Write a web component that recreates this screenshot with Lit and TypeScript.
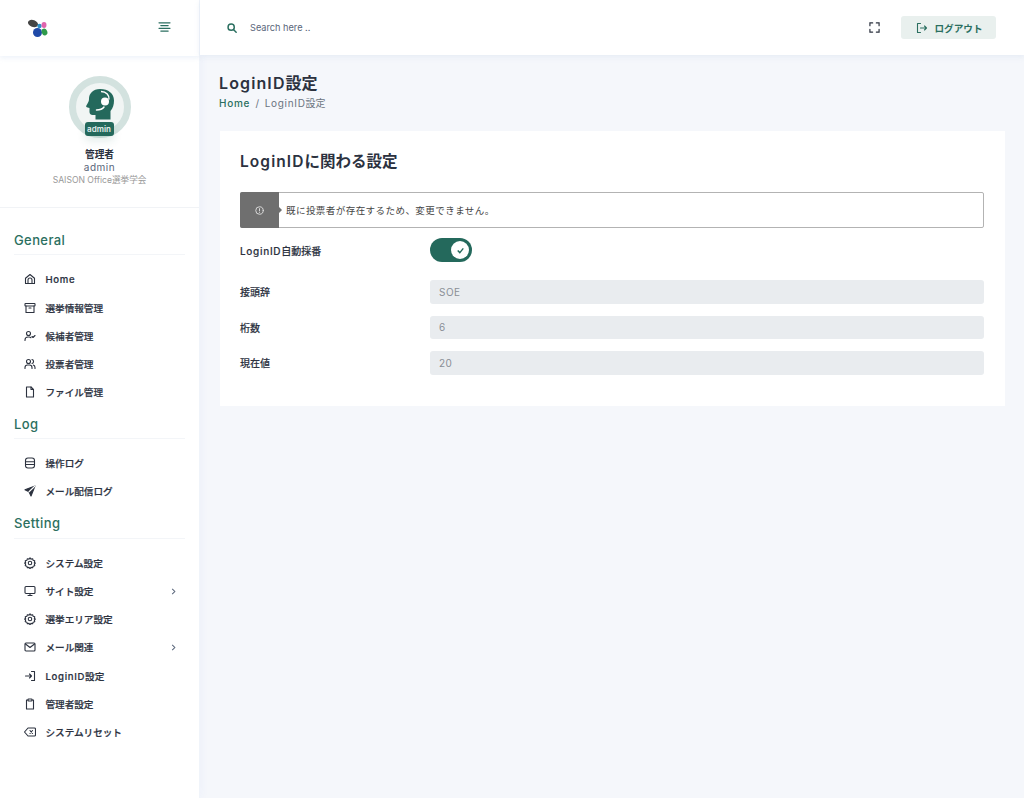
import { LitElement, html, css, svg } from "lit";
import { customElement } from "lit/decorators.js";

const ic = (body: unknown, sw = 2.2) => html`<svg class="ic" viewBox="0 0 24 24" fill="none" stroke="currentColor" stroke-width=${sw} stroke-linecap="round" stroke-linejoin="round">${body}</svg>`;

/* Latin runs are tracked out a little so they take the width of the reference's wide geometric face. */
const lat = (s: string) => s.split(/([A-Za-z0-9]+)/).map((p, i) => (i % 2 ? html`<span class="l">${p}</span>` : p));

const icons: Record<string, unknown> = {
  home: svg`<path d="M3 10.5 12 3l9 7.5V21H3z"/><path d="M8 21v-7a4 4 0 0 1 8 0v7"/>`,
  archive: svg`<rect x="2" y="3" width="20" height="5" rx="1"/><path d="M4 8v13h16V8"/><path d="M10 12h4"/>`,
  usercheck: svg`<circle cx="9" cy="7" r="4"/><path d="M2 21v-1a6 6 0 0 1 6-6h2a6 6 0 0 1 4 1.5"/><path d="m16 13 2 2 4-4"/>`,
  users: svg`<circle cx="9" cy="7" r="4"/><path d="M2 21v-2a5 5 0 0 1 5-5h4a5 5 0 0 1 5 5v2"/><path d="M16 3.1a4 4 0 0 1 0 7.8"/><path d="M22 21v-2a5 5 0 0 0-3.5-4.8"/>`,
  file: svg`<path d="M14 2H5v20h14V7z"/><path d="M14 2v5h5"/>`,
  db: svg`<rect x="3" y="2" width="18" height="20" rx="5"/><path d="M3 9.5h18M3 15h18"/>`,
  send: svg`<path d="M22 2 2 9.5l8 4 4 8.5z" fill="currentColor"/><path d="M22 2 10 13.5" stroke="#fff"/>`,
  gear: svg`<circle cx="12" cy="12" r="3.5"/><path d="M12 1.500l2 2.800 3.300-.8 1 3.200 3.200 1-.8 3.300 2 1-2 2 .8 3.300-3.200 1-1 3.200-3.300-.8-2 2.800-2-2.800-3.300.8-1-3.200-3.200-1 .8-3.300-2-2 2-1-.8-3.300 3.200-1 1-3.200 3.300.8z"/>`,
  monitor: svg`<rect x="2" y="3" width="20" height="14" rx="2"/><path d="M8 21h8M12 17v4"/>`,
  mail: svg`<rect x="2" y="4" width="20" height="16" rx="2"/><path d="m3 6 9 7 9-7"/>`,
  login: svg`<path d="M15 3h6v18h-6"/><path d="M3 12h12M11 8l4 4-4 4"/>`,
  clipboard: svg`<path d="M8 4H5v18h14V4h-3"/><rect x="8" y="2" width="8" height="4" rx="1"/>`,
  del: svg`<path d="M21 4H8l-7 8 7 8h13a2 2 0 0 0 2-2V6a2 2 0 0 0-2-2z"/><path d="m17 9-5 6M12 9l5 6"/>`,
};

type Item = { t: string; i: string; more?: boolean };
const groups: { h: string; items: Item[] }[] = [
  { h: "General", items: [
    { t: "Home", i: "home" }, { t: "選挙情報管理", i: "archive" }, { t: "候補者管理", i: "usercheck" },
    { t: "投票者管理", i: "users" }, { t: "ファイル管理", i: "file" } ] },
  { h: "Log", items: [ { t: "操作ログ", i: "db" }, { t: "メール配信ログ", i: "send" } ] },
  { h: "Setting", items: [
    { t: "システム設定", i: "gear" }, { t: "サイト設定", i: "monitor", more: true }, { t: "選挙エリア設定", i: "gear" },
    { t: "メール関連", i: "mail", more: true }, { t: "LoginID設定", i: "login" }, { t: "管理者設定", i: "clipboard" },
    { t: "システムリセット", i: "del" } ] },
];

@customElement("app-root")
export class AppRoot extends LitElement {
  static styles = css`
    :host { display: block; height: 798px; overflow: hidden; background: #f5f7fb; color: #2c323f;
      font-family: "Inter", "Noto Sans CJK JP", sans-serif; }
    * { box-sizing: border-box; }
    .l { letter-spacing: .07em; }
    .shell { display: flex; height: 798px; }
    .side { width: 200px; flex: none; background: #fff; box-shadow: 0 0 10px rgba(68,102,242,.05); border-right: 1px solid #f0f4fa; }
    .logo-bar { height: 56px; display: flex; align-items: center; justify-content: space-between; padding: 0 28px 0 27px; box-shadow: 0 2px 5px rgba(230,237,247,.7); }
    .logo { width: 22px; height: 22px; display: block; margin-top: -2px; }
    .menu { width: 13px; height: 11px; color: #2b6f60; margin-top: -3px; display: block; }
    .profile { height: 152px; display: flex; flex-direction: column; align-items: center; padding-top: 20px; border-bottom: 1px solid #f1f3f6; }
    .avatar { position: relative; width: 62px; height: 62px; border-radius: 50%; background: #f1f5f4; border: 7px solid #d3e2df; display: flex; align-items: center; justify-content: center; }
    .avatar svg { width: 30px; height: 32px; display: block; margin-top: -6px; }
    .badge { position: absolute; left: 9px; top: 39px; width: 29px; height: 14px; border-radius: 3px; background: #24695c; color: #e6f0ee; font-size: 8px; font-weight: 600; line-height: 14px; text-align: center; box-shadow: 0 5px 8px rgba(36,105,92,.12); }
    .pname { font-size: 9.700px; font-weight: 700; line-height: 12px; margin-top: 11px; color: #2c323f; }
    .puser { font-size: 10px; line-height: 12px; color: #59667a; letter-spacing: .5px; }
    .porg { font-size: 8.600px; line-height: 12px; margin-top: 1px; color: #999; }
    nav { padding: 19px 14px 0; }
    .gh { font-size: 13px; font-weight: 500; line-height: 26px; height: 28px; color: #2b6f60; letter-spacing: .4px; border-bottom: 1px solid #f3f5f8; }
    .group:last-child .gh { height: 29px; }
    .group + .group { margin-top: 2px; }
    .items { padding: 10.300px 0 2.300px; }
    .item { height: 28.200px; display: flex; align-items: center; padding-left: 10px; padding-right: 8px; font-size: 9.600px; font-weight: 500; color: #2c323f; -webkit-text-stroke: .2px #2c323f; }
    .item .ic { width: 12px; height: 12px; margin-right: 9.500px; flex: none; -webkit-text-stroke: 0; }
    .label { flex: 1; }
    .chev { width: 7px; height: 7px; color: #59667a; }
    .main { flex: 1; min-width: 0; display: flex; flex-direction: column; }
    .top { height: 55px; flex: none; background: #fff; display: flex; align-items: center; padding: 0 27px; box-shadow: 0 2px 5px rgba(225,232,243,.8); }
    .search-ic { width: 10px; height: 10px; color: #2b6f60; }
    .search { margin-left: 13px; font-size: 9.200px; color: #59667a; flex: 1; }
    .full { width: 11px; height: 11px; color: #2c323f; margin-right: 21px; display: block; }
    .logout { width: 95px; height: 23px; border-radius: 3px; background: #e9f0ee; color: #2b6f60; font-size: 9.600px; font-weight: 600; display: flex; align-items: center; justify-content: center; gap: 7px; margin-right: 1px; }
    .logout svg { width: 12px; height: 12px; margin-left: 1px; }
    .content { padding: 17px 19px 0; }
    h1 { margin: 0; font-size: 16px; font-weight: 600; line-height: 22px; color: #2c323f; }
    .crumb { display: flex; font-size: 10px; line-height: 14px; margin-top: 2px; color: #6b7480; }
    .crumb b { font-weight: 500; color: #2b6f60; }
    .crumb i { font-style: normal; margin: 0 5.500px; }
    .card { margin: 21px 0 0 1px; background: #fff; height: 275px; padding: 21px 21px 0 20px; }
    h2 { margin: 0; font-size: 15.500px; font-weight: 600; line-height: 20px; color: #2c323f; }
    .alert { margin-top: 20px; height: 36px; display: flex; align-items: center; border: 1px solid #b3b3b3; border-radius: 2px; font-size: 9.500px; color: #444; }
    .alert-ic { position: relative; width: 39px; height: 36px; margin: -1px 0 -1px -1px; flex: none; background: #6f6f6f; border-radius: 2px 0 0 2px; display: flex; align-items: center; justify-content: center; color: #ddd; }
    .alert-ic svg { width: 9px; height: 9px; }
    .alert-ic::after { content: ""; position: absolute; right: -3px; top: 15px; border-left: 3px solid #6f6f6f; border-top: 3px solid transparent; border-bottom: 3px solid transparent; }
    .alert-txt { margin-left: 7px; letter-spacing: .45px; }
    .row { display: grid; grid-template-columns: 190px 1fr; align-items: center; font-size: 10px; font-weight: 500; color: #2c323f; -webkit-text-stroke: .15px #2c323f; }
    .row.sw { margin-top: 10px; margin-bottom: 18px; height: 24px; }
    .row.f { height: 23.500px; margin-bottom: 12px; }
    .toggle { position: relative; width: 42px; height: 24px; border-radius: 12px; background: #24695c; }
    .knob { position: absolute; right: 3px; top: 3px; width: 18px; height: 18px; border-radius: 50%; background: #fff; display: flex; align-items: center; justify-content: center; color: #24695c; }
    .knob svg { width: 7px; height: 7px; }
    .input { height: 100%; background: #e9ecef; border-radius: 3px; padding: 0 9px; display: flex; align-items: center; font-size: 10px; font-weight: 400; color: #8a8f96; letter-spacing: .5px; -webkit-text-stroke: 0; }
  `;

  render() {
    return html`<div class="shell">
      <aside class="side">
        <div class="logo-bar">
          <svg class="logo" viewBox="0 0 22 22">
            <ellipse cx="6" cy="7.500" rx="5.200" ry="3.500" transform="rotate(20 6 7.500)" fill="#444"/>
            <circle cx="12.500" cy="10" r="2.200" fill="#2d8fc7"/>
            <ellipse cx="17" cy="9" rx="2.500" ry="3" fill="#e064ad"/>
            <circle cx="10.500" cy="16.500" r="4.500" fill="#1f4aa8"/>
            <ellipse cx="17.500" cy="16" rx="2.800" ry="3.500" transform="rotate(-20 17.500 16)" fill="#2f9a4b"/>
          </svg>
          <svg class="menu" viewBox="0 0 14 12" fill="none" stroke="currentColor" stroke-width="1.300" stroke-linecap="round">
            <path d="M1 2h12M3 5h8M1 8h12M3 11h8"/>
          </svg>
        </div>
        <div class="profile">
          <div class="avatar">
            <svg viewBox="0 0 30 32">
              <path fill="#24695c" d="M15 1C8 1 4 5.500 4 11c0 2-.5 3-2 5.500-1 1.500-1.500 2.500.5 3l2 .5v4c0 2 1.500 3 3 3h3v4.500h15V23c2.500-3 3.500-6.500 3.500-10.500C29 5.500 23.500 1 15 1z"/>
              <path fill="none" stroke="#fff" stroke-width="1.400" d="M16 3.500c5.500 0 8.500 4 8 8"/>
              <circle cx="20" cy="13.500" r="4" fill="#fff"/>
              <path fill="none" stroke="#fff" stroke-width="1.500" stroke-linecap="round" d="M19 19c-1.500 2-4 3-7.500 3"/>
            </svg>
            <div class="badge">admin</div>
          </div>
          <div class="pname">管理者</div>
          <div class="puser">admin</div>
          <div class="porg">SAISON Office選挙学会</div>
        </div>
        <nav>
          ${groups.map((g) => html`<div class="group">
            <div class="gh">${g.h}</div>
            <div class="items">
              ${g.items.map((it) => html`<div class="item">
                ${ic(icons[it.i])}<div class="label">${lat(it.t)}</div>
                ${it.more ? html`<svg class="chev" viewBox="0 0 8 8" fill="none" stroke="currentColor" stroke-width="1.200"><path d="m2.500 1 3 3-3 3"/></svg>` : ""}
              </div>`)}
            </div>
          </div>`)}
        </nav>
      </aside>
      <div class="main">
        <header class="top">
          <svg class="search-ic" viewBox="0 0 24 24" fill="none" stroke="currentColor" stroke-width="3.500" stroke-linecap="round"><circle cx="10" cy="10" r="7.500"/><path d="m16 16 6 6"/></svg>
          <div class="search">Search here ..</div>
          <svg class="full" viewBox="0 0 12 12" fill="none" stroke="currentColor" stroke-width="1.300" stroke-linecap="round"><path d="M1 4V1h3M8 1h3v3M11 8v3H8M4 11H1V8"/></svg>
          <div class="logout">
            <svg viewBox="0 0 24 24" fill="none" stroke="currentColor" stroke-width="2.200" stroke-linecap="round" stroke-linejoin="round"><path d="M9 3H3v18h6"/><path d="M9 12h12M17 8l4 4-4 4"/></svg>
            <span>ログアウト</span>
          </div>
        </header>
        <div class="content">
          <h1>${lat("LoginID設定")}</h1>
          <div class="crumb"><b>${lat("Home")}</b><i>/</i><span>${lat("LoginID設定")}</span></div>
          <section class="card">
            <h2>${lat("LoginIDに関わる設定")}</h2>
            <div class="alert">
              <div class="alert-ic"><svg viewBox="0 0 24 24" fill="none" stroke="currentColor" stroke-width="2.500" stroke-linecap="round"><circle cx="12" cy="12" r="10"/><path d="M12 7v6M12 17v.1"/></svg></div>
              <div class="alert-txt">既に投票者が存在するため、変更できません。</div>
            </div>
            <div class="row sw"><div>${lat("LoginID自動採番")}</div>
              <div class="toggle"><div class="knob"><svg viewBox="0 0 10 10" fill="none" stroke="currentColor" stroke-width="2"><path d="m1 5 3 3 5-6"/></svg></div></div>
            </div>
            <div class="row f"><div>接頭辞</div><div class="input">SOE</div></div>
            <div class="row f"><div>桁数</div><div class="input">6</div></div>
            <div class="row f"><div>現在値</div><div class="input">20</div></div>
          </section>
        </div>
      </div>
    </div>`;
  }
}
